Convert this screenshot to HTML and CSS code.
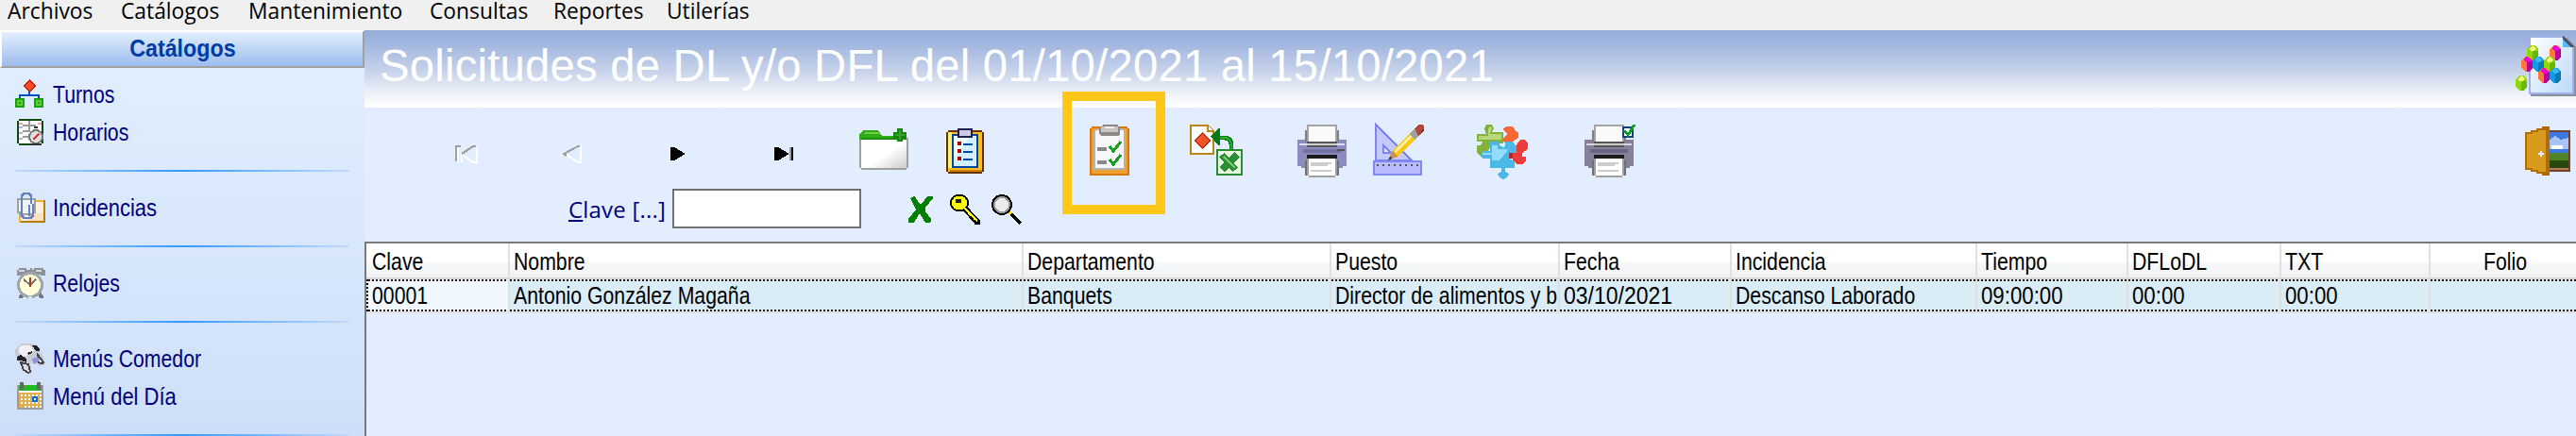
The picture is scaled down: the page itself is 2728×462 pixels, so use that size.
FILE: index.html
```
<!DOCTYPE html>
<html lang="es">
  <head>
    <meta charset="UTF-8" />
    <meta name="viewport" content="width=device-width, initial-scale=1.0" />
    <title>Solicitudes de DL y/o DFL</title>

    <link rel="stylesheet" href="styles.css">
  </head>
  <body>
    <nav class="menubar">
      <span>Archivos</span>
      <span>Catálogos</span>
      <span>Mantenimiento</span>
      <span>Consultas</span>
      <span>Reportes</span>
      <span>Utilerías</span>
    </nav>

    <div class="window">
      <aside class="sidebar">
        <div class="sidebar-title"><span>Catálogos</span></div>
        <div class="sidebar-list">
          <a class="item">
            <svg viewBox="0 0 16 16">
              <path d="M7 5h1v3h5v2h-1v-1H3v1H2V8h5z" fill="#0050c0" />
              <path d="M7.500 0l3.500 3.500-3.500 3.500L4 3.500z" fill="#c82000" />
              <path d="M7.500 1l2.500 2.500-2.500 2.500L5 3.500z" fill="#ff4a2c" />
              <path d="M0 10h5v5H0zM10 10h5v5h-5z" fill="#18a010" />
              <path d="M1 11h3v3H1zM11 11h3v3h-3z" fill="#62cc30" />
              <path d="M2 12h1v1H2zM12 12h1v1h-1z" fill="#18a010" />
            </svg>
            <span>Turnos</span>
          </a>
          <a class="item">
            <svg viewBox="0 0 16 16">
              <path d="M1 2h1V1h12v1h1v12h-1v1H2v-1H1z" fill="#124a12" />
              <path d="M2 2h12v12H2z" fill="#fdfdfd" />
              <path d="M2 3h2v1H2zM12 3h2v1h-2z" fill="#ff9c9c" />
              <path d="M2 5h2v1H2zM2 8h2v1H2zM2 11h2v1H2z" fill="#b4b0f0" />
              <path d="M7 2h1v6H7zM4 4h7v1H4zM4 7h3v1H4zM4 10h3v1H4z" fill="#999" />
              <circle cx="11" cy="10.500" r="4" fill="#777" />
              <circle cx="11" cy="10.500" r="3" fill="#dedede" />
              <path d="M9.500 12l3-3" stroke="#e03030" />
              <path d="M10 5h2v1h-2zM8 14h6v1H8z" fill="#333" />
            </svg>
            <span>Horarios</span>
          </a>
          <div class="separator"></div>
          <a class="item wide">
            <svg viewBox="0 0 16 16">
              <path d="M2 4h14v12H2z" fill="#b87f10" />
              <path d="M2 4h13v1H3v11H2z" fill="#f0b030" />
              <path d="M3 5h12v10H3z" fill="#fff0e0" />
              <path d="M9 11h6v4H6z" fill="#ffe0c0" />
              <path d="M1.500 3.500h9v7h-1v1h-7v-1h-1z" fill="#edf2f8" stroke="#a0a0a0" />
              <path d="M7.500 6.500v6M9.500 6v6l-1 1.500h-4l-1-1.500V2l1-1.500h3L8.500 2v4" fill="none" stroke="#6481c2" stroke-width="1.400" />
            </svg>
            <span>Incidencias</span>
          </a>
          <div class="separator"></div>
          <a class="item">
            <svg viewBox="0 0 16 16">
              <path d="M1 1h1V0h4v1h2V0h1v1h1V0h5v1h1v3h-2L11 3H6L3 4H1z" fill="#8c9298" />
              <path d="M2 1h3v1H2zM11 1h3v1h-3z" fill="#d5d8da" />
              <path d="M2 15l2-3h9l2 3v1h-2l-1-2H5l-1 2H2z" fill="#727880" />
              <circle cx="8" cy="9" r="7" fill="#a0a6ac" />
              <circle cx="8" cy="9" r="5.500" fill="#ffffd8" />
              <path d="M4.500 6L8 9l3-3" fill="none" stroke="#777" />
              <path d="M8 5v5" stroke="#b03a20" />
              <path d="M7 15h2v1H7z" fill="#d5e4fa" />
            </svg>
            <span>Relojes</span>
          </a>
          <div class="separator"></div>
          <a class="item">
            <svg viewBox="0 0 16 16">
              <path d="M0 3l3-3h6l3 1 1 3 2 3 1 4-3 1-3-2-2 1 1 4-2 1-3-2-2-5-2-3z" fill="#c8ccd6" />
              <path d="M2 2l2-1h4l2 3-3 2-3 1-2-2z" fill="#f2f0f6" />
              <path d="M9 1h2l2 2v1h-2zM1 7l2-1 3 2v2l-3-1H1zM6 5l3-1v1L7 6z" fill="#242028" />
              <path d="M3 10l4 1 1 4-1 .500L4.500 14zM12 6l3 4-1 .800-2-1z" fill="#ddd" stroke="#44424a" />
              <path d="M9 8l3-1 1 2-3 2z" fill="#8c94d8" />
            </svg>
            <span>Menús Comedor</span>
          </a>
          <a class="item wide">
            <svg viewBox="0 0 16 16">
              <path d="M1 2h14v13H1z" fill="#999ba0" />
              <path d="M2 2h12v4H2z" fill="#25bb25" />
              <path d="M2 5h12v1H2z" fill="#fff" />
              <path d="M2 6h12v8H2z" fill="#e3ae4d" />
              <path d="M3 7.500h11M3 9.500h11M3 11.500h11M5 13.500h9" stroke="#fff" stroke-dasharray="1 1" />
              <path d="M9 8h3v3H9z" fill="#0070dc" />
              <path d="M10 9h1v1h-1z" fill="#fff" />
              <path d="M3 1h1v3H3zM12 1h1v3h-1z" fill="#ccc" stroke="#666" stroke-width=".700" />
            </svg>
            <span>Menú del Día</span>
          </a>
          <div class="separator"></div>
        </div>
      </aside>

      <main class="content">
        <header class="banner">
          <h1>Solicitudes de DL y/o DFL del 01/10/2021 al 15/10/2021</h1>
          <svg class="logo" viewBox="0 0 32 41">
            <defs>
              <linearGradient id="page" x1="0" y1="0" x2="1" y2="1">
                <stop offset="0" stop-color="#fff" />
                <stop offset="1" stop-color="#bcd8fa" />
              </linearGradient>
              <g id="hexGreen">
                <path d="M0 2l2-2h2l2 2v4L4 8H2L0 6z" fill="#8fd800" />
                <path d="M1 2l2-2 2 2-2 1.500z" fill="#f0f880" />
                <path d="M3 3h3v3L4 8H3z" fill="#66b800" />
              </g>
              <g id="hexPink">
                <path d="M0 2l2-2h2l2 2v4L4 8H2L0 6z" fill="#ff7838" />
                <path d="M1 1.500L3 0l3 2-3 1.500z" fill="#f000e0" />
                <path d="M3 3l3-1v4L4 8H3z" fill="#b80098" />
              </g>
              <g id="hexBlue">
                <path d="M0 2l2-2h2l2 2v4L4 8H2L0 6z" fill="#109ce4" />
                <path d="M1 1.500L3 0l2 1.500-2 2z" fill="#40b8f4" />
                <path d="M3 3l3-1v4L4 8H3z" fill="#0878b8" />
              </g>
            </defs>
            <path d="M8 4h19l5 5v26H8z" fill="#8890a0" />
            <path d="M7 3h18l6 6v25H7z" fill="#a0b0e8" />
            <path d="M8 4h17v5h5v24H8z" fill="url(#page)" />
            <path d="M25 3l6 6h-6z" fill="#4a5468" />
            <path d="M25 5l4 4h-4z" fill="#58b8f4" />
            <use href="#hexGreen" x="6" y="8" />
            <use href="#hexPink" x="18" y="8" />
            <use href="#hexPink" x="3" y="14" />
            <use href="#hexBlue" x="9" y="14" />
            <use href="#hexGreen" x="15" y="14" />
            <use href="#hexPink" x="12" y="20" />
            <use href="#hexBlue" x="18" y="20" />
            <use href="#hexGreen" x="0" y="24" />
          </svg>
        </header>

        <div class="toolbar">
          <svg class="nav-first" viewBox="0 0 13 30">
            <path d="M1.500 13v8M3.500 21v-4l6 4h2v-8" fill="none" stroke="#fff" />
            <path d="M3 12.500H.500v8M11 12.500H9.500l-6 4" fill="none" stroke="#a0a0a0" />
          </svg>
          <svg class="nav-prev" viewBox="0 0 10 30">
            <path d="M9.500 12v9H8l-6-4" fill="none" stroke="#fff" />
            <path d="M9 12.500H8L.500 16.500 2 17.500" fill="none" stroke="#a0a0a0" />
          </svg>
          <svg class="nav-next" viewBox="0 0 8 30">
            <path d="M0 13h2l6 3.500L2 20H0z" fill="#000" />
          </svg>
          <svg class="nav-last" viewBox="0 0 10 30">
            <path d="M0 13h2l6 3.500L2 20H0z" fill="#000" />
            <path d="M9 13h1v7H9z" fill="#000" />
            <path d="M8 13h1v7H8z" fill="#999" />
          </svg>
          <svg class="folder" viewBox="0 0 26 30">
            <defs>
              <linearGradient id="sheet" x1="0" y1="0" x2="1" y2="1">
                <stop offset=".550" stop-color="#fff" />
                <stop offset="1" stop-color="#ccc" />
              </linearGradient>
            </defs>
            <path d="M0 8h26v16h-1v1H1v-1H0z" fill="#a0a0a0" />
            <path d="M1 8h24v16H1z" fill="url(#sheet)" />
            <path d="M0 6l2-2h8l2 3h13v2H0z" fill="#2eac14" />
            <path d="M3 5h7l1 1H2z" fill="#74cc44" />
            <path d="M1 8h24v1H1z" fill="#1c8c0c" />
            <path d="M20 3h3v2h2v3h-2v2h-3V8h-2V5h2z" fill="#17840f" />
            <path d="M21 4h1v2h2v1h-2v2h-1V7h-2V6h2z" fill="#35a52a" />
          </svg>
          <svg class="clipboard" viewBox="0 0 20 30">
            <path d="M1 4h18v1h1v21h-1v1H1v-1H0V5h1z" fill="#643200" />
            <path d="M1 5h18v21H1z" fill="#ffbc20" />
            <path d="M1 5h2v19H1z" fill="#fff07c" />
            <path d="M2 25h17v1H2z" fill="#d07c00" />
            <path d="M3 6h14v18H3z" fill="#0044a0" />
            <path d="M4 7h12v16H4z" fill="#d2efff" />
            <path d="M4 7h9L4 19z" fill="#effaff" />
            <path d="M6 3h8v5H6z" fill="#202050" />
            <path d="M7 4h6v3H7z" fill="#cfcbe6" />
            <path d="M6 10h2v2H6zM6 14h2v2H6zM6 18h2v2H6z" fill="#b00000" />
            <path d="M9 11h5v1H9zM9 15h5v1H9zM9 19h5v1H9z" fill="#0048a8" />
          </svg>
          <div class="marked">
            <svg class="approve" viewBox="0 0 21 30">
              <path d="M1 2h19v1h1v25H0V3h1z" fill="#d87808" />
              <path d="M1 3h19v24H1z" fill="#eea030" />
              <path d="M2 5l2-2h13l2 2v20H2z" fill="#b4b4b4" />
              <path d="M3 4h15v20H3z" fill="#f8f8fa" />
              <path d="M6 2l1-1h8v1l1 1v3l-1 1H6L5 6V3z" fill="#8c8984" />
              <path d="M6 2h9v3H6z" fill="#c8c5c0" />
              <path d="M8 2h5v1H8z" fill="#eee" />
              <path d="M4 13h5v2H4zM4 20h5v2H4z" fill="#8a8a8a" />
              <path d="M10.500 12.500l2 2.500 4-5M10.500 19.500l2 2.500 4-5" fill="none" stroke="#15a025" stroke-width="1.600" />
            </svg>
            <div class="marker"></div>
          </div>
          <svg class="excel" viewBox="0 0 28 30">
            <path d="M.500 1.500h9l3 3v12H.500z" fill="#fff" stroke="#bb8618" />
            <path d="M9.500 1.500v3h3" fill="#fff" stroke="#bb8618" />
            <path d="M6.500 5l4.500 4.500L6.500 14 2 9.500z" fill="#c03010" />
            <path d="M6.500 6l3.500 3.500L6.500 13 3 9.500z" fill="#f0542c" />
            <path d="M22 15v-3q0-4-4-4h-3" fill="none" stroke="#087818" stroke-width="2.400" />
            <path d="M22 15v-3q0-4-4-4h-3" fill="none" stroke="#28b028" />
            <path d="M11 7l4-4h1v9h-1z" fill="#087818" />
            <path d="M14.500 14.500h13v13h-13z" fill="#e8fae0" stroke="#2c8c34" />
            <path d="M17 17l7 8M25 17l-8 8" stroke="#2c8c34" stroke-width="3.600" />
            <path d="M18 18l6 6" stroke="#7cc874" />
          </svg>
          <svg class="printer" viewBox="0 0 26 30">
            <path d="M0 9h4V4h18v5h4v14h-2v1H2v-1H0z" fill="#8c8cc0" />
            <path d="M4 4h1v6H4zM21 4h1v6h-1z" fill="#808080" />
            <path d="M5 1h16v12H5z" fill="#a4a4a4" />
            <path d="M6 2h14v8H6z" fill="#fafafa" />
            <path d="M1 11h4v1H1zM21 11h4v1h-4z" fill="#dcdcf4" />
            <path d="M5 10h16v1H5zM5 12h16v1H5z" fill="#555" />
            <path d="M5 11h16v1H5z" fill="#ccc" />
            <path d="M3 14h20v2H3z" fill="#7474a4" />
            <path d="M21 14h4v1h-4z" fill="#555" />
            <path d="M4 20h1v8H4zM21 20h1v8h-1z" fill="#707070" />
            <path d="M5 19h16v9h-1v1H6v-1H5z" fill="#a0a0a0" />
            <path d="M6 19h14v9H6z" fill="#fff" />
            <path d="M7 21h11v1H7zM7 22h9v1H7zM7 25h11v1H7z" fill="#ccc" />
            <path d="M5 17h16v2H5z" fill="#1c1c1c" />
          </svg>
          <svg class="ruler" viewBox="0 0 27 30">
            <path d="M1.500 1v19h19z" fill="#c4c8ff" stroke="#7c84f0" />
            <path d="M5.500 12v4h4z" fill="#e2eeff" stroke="#7c84f0" />
            <path d="M.500 20.500h25v7H.500z" fill="#b8bcff" stroke="#8088f4" />
            <path d="M2 22.500h22" stroke="#555" stroke-dasharray="1 2" />
            <path d="M8 20l2-5 11-11 3 3-11 11z" fill="#f8c818" />
            <path d="M11 15l10-10 1 1-10 10z" fill="#fff09c" />
            <path d="M8 20l2-5 3 3z" fill="#c89058" />
            <path d="M8 20l1-2 1 1z" fill="#333" />
            <path d="M19 6l3-3 3 3-3 3z" fill="#a0a0a0" />
            <path d="M22 3l2-2h2l1 1v2l-3 3z" fill="#b04838" />
            <path d="M25 6l2-3v1l-3 3z" fill="#701818" />
          </svg>
          <svg class="puzzle" viewBox="0 0 27 30">
            <path d="M19 12h2l1-2 1-1h2l2 2v3l-3 2v2h2v2l-2 2h-3l-2-2z" fill="#ee3c38" />
            <path d="M14 4v-1l2-1h3l2 3h1v3l-3 2-2 2-3-2v-2l2-2z" fill="#f86834" />
            <path d="M0 6h5l-1-3 1-2h3l1 2-1 2h6v6H8l-2 4-4 3-2-2v-4h2l1-2H0z" fill="#80b23c" />
            <path d="M1 7h5V3l1-1 1 1-1 3h6v3H1z" fill="#b8d878" />
            <path d="M7 10h5v2l2 1 1-1v-2h4l2 3v3h-2l-2 1v2l2 1h1v4h-5v2l2 1-1 2-2 1-2-1-1-2 2-1v-2H7v-5H3l-1-2 1-2h4z" fill="#4cb8e8" />
            <path d="M8 12h3v2h5v1l-4 5H8v-3H3v-1h5z" fill="#92dcfa" />
            <path d="M17 16h2v3h-2z" fill="#a03038" />
          </svg>
          <svg class="printer-check" viewBox="0 0 27 30">
            <path d="M0 9h4V4h18v5h4v14h-2v1H2v-1H0z" fill="#86809a" />
            <path d="M4 4h1v6H4zM21 4h1v6h-1z" fill="#808080" />
            <path d="M5 1h16v12H5z" fill="#a4a4a4" />
            <path d="M6 2h14v8H6z" fill="#fafafa" />
            <path d="M1 11h4v1H1zM21 11h4v1h-4z" fill="#d8d4e4" />
            <path d="M5 10h16v1H5zM5 12h16v1H5z" fill="#555" />
            <path d="M5 11h16v1H5z" fill="#ccc" />
            <path d="M3 14h20v2H3z" fill="#6a6484" />
            <path d="M4 20h1v8H4zM21 20h1v8h-1z" fill="#707070" />
            <path d="M5 19h16v9h-1v1H6v-1H5z" fill="#a0a0a0" />
            <path d="M6 19h14v9H6z" fill="#fff" />
            <path d="M7 21h11v1H7zM7 22h9v1H7zM7 25h11v1H7z" fill="#ccc" />
            <path d="M5 17h16v2H5z" fill="#1c1c1c" />
            <path d="M20.500 2.500h5v5h-5z" fill="#fff" stroke="#104080" />
            <path d="M21 4l2 2.500L26.500 1" fill="none" stroke="#10a020" stroke-width="1.400" />
          </svg>
          <svg class="door" viewBox="0 0 24 30">
            <path d="M11 4h13v22H11z" fill="#744228" />
            <path d="M12 5h11v19H12z" fill="#3c78e0" />
            <path d="M13 9l3-2 3 2 4-1v6H13z" fill="#a8c4f4" />
            <path d="M14 12h6v2h-6z" fill="#fff" />
            <path d="M13 16h10v8H13z" fill="#508428" />
            <path d="M13 20h10v4H13z" fill="#28480c" />
            <path d="M12 24h11v1H12z" fill="#b07c60" />
            <path d="M0 5h3V4h3V3h3V2h4v26H9v-1H6v-1H3v-1H0z" fill="#b06c08" />
            <path d="M1 6h3V5h3V4h4v22H7v-1H4v-1H1z" fill="#d89a1c" />
            <path d="M8 15h1v1h1v1H9v1H8v-1H7v-1h1z" fill="#e2eeff" />
          </svg>
        </div>

        <div class="searchbar">
          <label for="clave"><u>C</u>lave [...]</label>
          <input type="text" id="clave" />
          <svg class="clear" viewBox="0 0 13 16">
            <path d="M1.500 1h3l3 4 3-4h3v2l-4 5 3 5-1 2h-2l-3-4-3 4h-2v-2l4-5-4-5z" fill="#fff" />
            <path d="M1 2l2-1 1 1 2 3h1l3-4h3v1L9 7v2l3 4v1l-1 1H9l-3-5-3 5H0v-2l4-5z" fill="#008000" />
          </svg>
          <svg class="key" viewBox="0 0 16 16">
            <path d="M7 5l8.500 9v1.500h-1.500L6 7z" fill="#ff0" stroke="#000" stroke-width="1" />
            <path d="M11 11h2v2h2v3h-2v-3h-2z" fill="#000" />
            <ellipse cx="5" cy="4.500" rx="4.600" ry="4.200" fill="#ff0" stroke="#000" stroke-width=".900" />
            <path d="M7.500 6l7 7.500v1L6.500 7z" fill="#ff0" />
            <path d="M3 2.500h3v2H3z" fill="#222" />
          </svg>
          <svg class="lens" viewBox="0 0 16 16">
            <path d="M10 10l5.500 5.500" stroke="#000" stroke-width="2" />
            <path d="M8.500 8.500l2 2" stroke="#f8e020" stroke-width="1.500" />
            <circle cx="5.500" cy="5.500" r="4.900" fill="#ececec" stroke="#000" stroke-width="1.200" />
            <circle cx="5.500" cy="5.500" r="4" fill="none" stroke="#999" />
          </svg>
        </div>

        <section class="grid">
          <div class="row head">
            <div class="cell"><span>Clave</span></div>
            <div class="cell"><span>Nombre</span></div>
            <div class="cell"><span>Departamento</span></div>
            <div class="cell"><span>Puesto</span></div>
            <div class="cell"><span>Fecha</span></div>
            <div class="cell"><span>Incidencia</span></div>
            <div class="cell"><span>Tiempo</span></div>
            <div class="cell"><span>DFLoDL</span></div>
            <div class="cell"><span>TXT</span></div>
            <div class="cell folio"><span>Folio</span></div>
          </div>
          <div class="row selected">
            <div class="cell focused"><span>00001</span></div>
            <div class="cell"><span>Antonio González Magaña</span></div>
            <div class="cell"><span>Banquets</span></div>
            <div class="cell"><span>Director de alimentos y b</span></div>
            <div class="cell date"><span>03/10/2021</span></div>
            <div class="cell"><span>Descanso Laborado</span></div>
            <div class="cell time"><span>09:00:00</span></div>
            <div class="cell time"><span>00:00</span></div>
            <div class="cell time"><span>00:00</span></div>
            <div class="cell"></div>
          </div>
        </section>
      </main>
    </div>
  </body>
</html>
```
FILE: styles.css
```
* {
  box-sizing: border-box;
}

body {
  margin: 0;
  height: 462px;
  overflow: hidden;
  display: flex;
  flex-direction: column;
  font-family: "Liberation Sans", Arial, sans-serif;
  font-size: 25px;
  background: #e2eeff;
}

svg {
  display: block;
  flex: none;
  shape-rendering: crispEdges;
}

/* Menu bar */
.menubar {
  flex: none;
  display: grid;
  grid-template-columns: 120px 135px 192px 131px 120px 100px;
  height: 32px;
  padding-left: 8px;
  background: #f0f0f0;
  color: #000;
  font-family: "Open Sans", "Noto Sans", sans-serif;
  font-size: 24px;
  line-height: 22px;
  white-space: nowrap;
}

.menubar span {
  justify-self: start;
  transform: scaleX(0.95);
  transform-origin: left;
}

.window {
  flex: 1;
  display: flex;
  min-height: 0;
}

/* Sidebar */
.sidebar {
  flex: none;
  width: 386px;
  background: linear-gradient(#e3efff, #cddff8);
}

.sidebar-title {
  height: 40px;
  border: 2px solid #fff;
  border-right-color: #a0a0a0;
  border-bottom-color: #a0a0a0;
  background: linear-gradient(#e3efff, #9cbcec);
  color: #003ca5;
  font-weight: bold;
  line-height: 35px;
  text-align: center;
}

.sidebar-title span {
  display: inline-block;
  transform: scaleX(0.93);
}

.sidebar-list {
  padding: 8px 16px 0;
}

.item {
  display: flex;
  align-items: center;
  gap: 8px;
  height: 40px;
  color: #000080;
  line-height: 40px;
  white-space: nowrap;
}

.item svg {
  width: 32px;
  height: 32px;
}

.item span,
.cell span {
  display: inline-block;
  transform: scaleX(0.85);
  transform-origin: left;
}

.item.wide span {
  transform: scaleX(0.88);
}

.separator {
  height: 40px;
  padding-top: 20px;
}

.separator::before {
  content: "";
  display: block;
  height: 2px;
  background: linear-gradient(90deg, #c4dafa, #3399ff, #c4dafa);
}

/* Banner */
.content {
  flex: 1;
  display: flex;
  flex-direction: column;
  min-width: 0;
}

.banner {
  flex: none;
  display: flex;
  justify-content: space-between;
  height: 82px;
  padding-left: 16px;
  background: linear-gradient(#93add9, #a5b8e0 20%, #c3d0e9 50%, #eceff7 80%, #fff);
}

.banner h1 {
  margin: 0;
  color: #fff;
  font-size: 47.3px;
  font-weight: normal;
  letter-spacing: 0.2px;
  line-height: 76px;
  white-space: nowrap;
}

.logo {
  width: 64px;
  height: 82px;
}

/* Toolbar */
.toolbar {
  flex: none;
  display: flex;
  height: 76px;
  padding: 16px 6px 0 96px;
}

.toolbar svg {
  height: 60px;
}

.nav-first {
  width: 26px;
}

.nav-prev {
  width: 20px;
  margin-left: 88px;
}

.nav-next {
  width: 16px;
  margin-left: 94px;
}

.nav-last {
  width: 20px;
  margin-left: 94px;
}

.folder {
  width: 52px;
  margin-left: 70px;
}

.clipboard {
  width: 40px;
  margin-left: 40px;
}

.marked {
  position: relative;
  margin-left: 112px;
}

.approve {
  width: 42px;
}

.marker {
  position: absolute;
  left: -29px;
  top: -33px;
  width: 109px;
  height: 130px;
  border: 10px solid #ffc818;
}

.excel {
  width: 56px;
  margin-left: 64px;
}

.printer {
  width: 52px;
  margin-left: 58px;
}

.ruler {
  width: 54px;
  margin-left: 28px;
}

.puzzle {
  width: 54px;
  margin-left: 56px;
}

.printer-check {
  width: 54px;
  margin-left: 60px;
}

.door {
  width: 48px;
  margin-left: auto;
}

/* Search */
.searchbar {
  flex: none;
  display: flex;
  height: 66px;
  padding: 10px 0 0 216px;
}

.searchbar label {
  width: 110px;
  color: #000080;
  font-family: "Open Sans", "Noto Sans", sans-serif;
  font-size: 24px;
  letter-spacing: 0.2px;
  line-height: 44px;
  white-space: nowrap;
}

.searchbar input {
  width: 200px;
  height: 42px;
  padding: 0 6px;
  border: 2px solid #717171;
  background: #fff;
  font-size: 24px;
}

.searchbar svg {
  height: 32px;
  margin-top: 6px;
}

.clear {
  width: 26px;
  margin-left: 50px;
}

.key {
  width: 32px;
  margin-left: 18px;
}

.lens {
  width: 32px;
  margin-left: 12px;
}

/* Grid */
.grid {
  flex: 1;
  border: 2px solid #7a7a7a;
  border-right: none;
  border-bottom: none;
  color: #000;
}

.row {
  display: grid;
  grid-template-columns: 152px 544px 326px 242px 182px 260px 160px 162px 158px 1fr;
}

.cell {
  padding-left: 4px;
  border-right: 2px solid #e0e0e0;
  overflow: hidden;
  white-space: nowrap;
}

.cell:last-child {
  border-right: none;
}

.cell.date span {
  transform: scaleX(0.92);
}

.cell.time span {
  transform: scaleX(0.89);
}

.head {
  height: 38px;
  border-bottom: 2px solid #d5d5d5;
  background: linear-gradient(#fff 20px, #f7f8fa 20px, #f0f1f3);
  line-height: 38px;
}

.head .cell:first-child {
  padding-left: 6px;
}

.head .folio {
  padding-left: 56px;
}

.selected {
  height: 36px;
  border-bottom: 2px solid #e0e0e0;
  background: #daedf7;
  line-height: 34px;
}

.selected .cell {
  background:
    repeating-linear-gradient(90deg, #201010 0 2px, transparent 2px 4px) top / 100% 2px no-repeat,
    repeating-linear-gradient(90deg, #201010 0 2px, transparent 2px 4px) bottom / 100% 2px no-repeat;
}

.selected .focused {
  border-left: 2px dotted #000;
  background-color: #f0f7ff;
}
```
